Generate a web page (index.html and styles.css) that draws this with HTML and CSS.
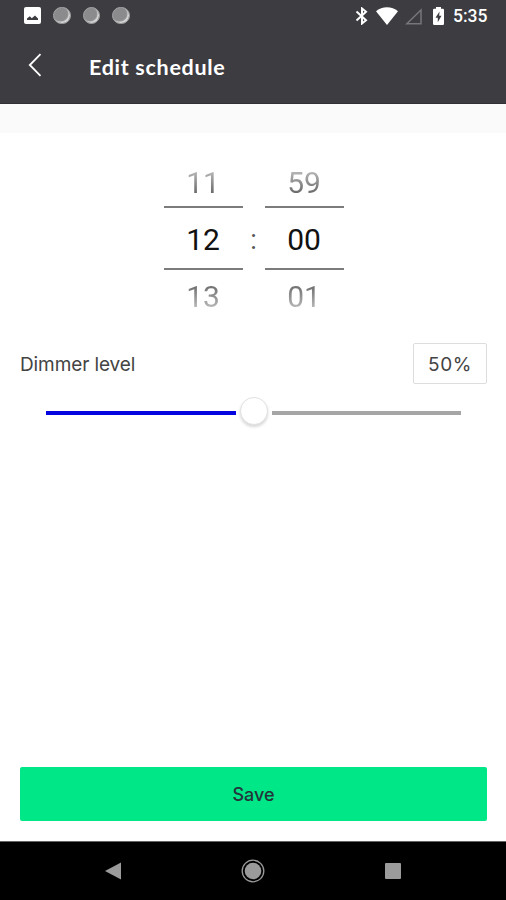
FILE: index.html
```html
<!DOCTYPE html>
<html lang="en">

<head>
    <meta charset="utf-8">
    <title>Edit schedule</title>
    <link rel="stylesheet" href="styles.css">
</head>

<body>
    <header>
        <div class="status-bar">
            <div class="notifications">
                <svg width="17" height="17" viewBox="0 0 17 17">
                    <rect width="17" height="17" rx="2" fill="#fff" />
                    <path d="M3 13v-1.5L5.8 9.3l2 2L11 8.5l3 3V13z" fill="#3d3c41" />
                </svg>
                <span class="dot"></span>
                <span class="dot"></span>
                <span class="dot"></span>
            </div>
            <div class="system">
                <svg class="bluetooth" width="13" height="18" viewBox="0 0 13 18">
                    <path d="M1.5 4.5l9.5 8.7L7 16.5v-15l4 3.3-9.5 8.7" fill="none" stroke="#fff" stroke-width="2" />
                </svg>
                <svg class="wifi" width="22" height="18" viewBox="0 0 22 18">
                    <path d="M0 4.2C6-1.1 16-1.1 22 4.2L11 18z" fill="#fff" />
                </svg>
                <svg class="signal" width="18" height="18" viewBox="0 0 18 18">
                    <path d="M1.8 16.7L16 3v13.7z" fill="none" stroke="#77767a" stroke-width="1.5" />
                </svg>
                <svg class="battery" width="11" height="18" viewBox="0 0 11 18">
                    <path d="M1.2 1.8H3V0h5v1.8h1.8Q11 1.8 11 3v13.8q0 1.2-1.2 1.2H1.2Q0 18 0 16.8V3q0-1.2 1.2-1.2z" fill="#fff" />
                    <path d="M6.5 4.5L2.5 10.7h2.3v4.5l3.7-6.4H6.2z" fill="#3d3c41" />
                </svg>
                <span class="clock">5:35</span>
            </div>
        </div>
        <div class="title-bar">
            <svg width="14" height="24" viewBox="0 0 14 24">
                <path d="M12.5 1.2L1.8 12l10.7 10.8" fill="none" stroke="#fff" stroke-width="1.8" />
            </svg>
            <h1>Edit schedule</h1>
        </div>
    </header>

    <main>
        <div class="time-picker">
            <div class="wheel">
                <span class="previous">11</span>
                <span class="current">12</span>
                <span class="next">13</span>
            </div>
            <span class="colon">:</span>
            <div class="wheel">
                <span class="previous">59</span>
                <span class="current">00</span>
                <span class="next">01</span>
            </div>
        </div>

        <div class="dimmer">
            <label>Dimmer level</label>
            <output>50%</output>
        </div>
        <div class="slider">
            <span class="track filled"></span>
            <span class="thumb"></span>
            <span class="track"></span>
        </div>

        <button type="button">Save</button>
    </main>

    <nav>
        <svg width="16" height="18" viewBox="0 0 16 18">
            <path d="M0 9L16 .5v17z" fill="#9b9b9b" />
        </svg>
        <svg width="24" height="24" viewBox="0 0 24 24">
            <circle cx="12" cy="12" r="8.3" fill="#9b9b9b" />
            <circle cx="12" cy="12" r="10.8" fill="none" stroke="#9b9b9b" stroke-width="1.3" />
        </svg>
        <svg width="16" height="16" viewBox="0 0 16 16">
            <rect width="16" height="16" rx="1" fill="#9b9b9b" />
        </svg>
    </nav>
</body>

</html>
```
FILE: styles.css
```css
* {
    box-sizing: border-box;
}

body {
    margin: 0;
    height: 900px;
    display: flex;
    flex-direction: column;
    font-family: Inter, sans-serif;
    background-color: #fff;
}

svg {
    display: block;
    flex-shrink: 0;
}

header {
    height: 104px;
    background-color: #3d3c41;
    border-bottom: 1px solid #313035;
    color: #fff;
}

.status-bar {
    height: 31px;
    padding: 0 18px 0 24px;
    display: flex;
    justify-content: space-between;
    align-items: center;
}

.notifications,
.system {
    display: flex;
    align-items: center;
}

.notifications {
    gap: 12px;
}

.dot {
    width: 17.5px;
    height: 17.5px;
    border-radius: 50%;
    background-color: #8b8a8c;
    border: 1px solid #a5a4a6;
    box-shadow: inset -1.5px -1.5px 1px #d8d8d8;
}

.wifi {
    margin-left: 8px;
}

.signal {
    margin-left: 7px;
}

.battery {
    margin-left: 10px;
}

.clock {
    margin-left: 9px;
    width: 35px;
    font: 500 17.5px/20px Roboto, sans-serif;
}

.title-bar {
    height: 68px;
    padding-left: 28px;
    display: flex;
    align-items: center;
}

h1 {
    margin: 4px 0 0 47px;
    font: bold 21.5px/26px Lato, sans-serif;
    letter-spacing: 0.7px;
}

main {
    flex: 1;
    display: flex;
    flex-direction: column;
    padding: 0 19px 20px 20px;
    border-top: 29px solid #fafafa;
}

.time-picker {
    margin-top: 18px;
    display: flex;
    justify-content: center;
    align-items: center;
    font: 30px/60px Roboto, sans-serif;
}

.wheel {
    width: 79px;
    display: flex;
    flex-direction: column;
    text-align: center;
}

.wheel span {
    color: transparent;
    background-clip: text;
    -webkit-background-clip: text;
}

.wheel .previous {
    height: 55px;
    line-height: 64px;
    background-image: linear-gradient(#b8b8b8 20px, #5c5c5c 46px);
}

.wheel .current {
    height: 64px;
    line-height: 63px;
    color: #111;
    border-top: 2px solid #7c7c7c;
    border-bottom: 2px solid #7c7c7c;
}

.wheel .next {
    height: 55px;
    line-height: 53px;
    background-image: linear-gradient(#686868 14px, #c0c0c0 40px);
}

.colon {
    width: 22px;
    padding-top: 4px;
    text-align: center;
    color: #555;
    font-size: 27px;
}

.dimmer {
    margin-top: 18px;
    display: flex;
    justify-content: space-between;
    align-items: center;
    font-size: 19px;
    color: #444;
}

label {
    padding-top: 2px;
    letter-spacing: -0.1px;
}

output {
    width: 74px;
    height: 41px;
    line-height: 41px;
    text-align: center;
    border: 1.5px solid #ddd;
    border-radius: 2px;
    letter-spacing: 0.6px;
}

.slider {
    height: 28px;
    margin: 13px 26px 0;
    display: flex;
    align-items: center;
}

.track {
    flex: 1;
    height: 3.5px;
    margin-top: 4px;
    background-color: #a5a5a5;
}

.track.filled {
    background-color: #0505df;
}

.thumb {
    width: 28px;
    height: 28px;
    margin: 0 4px;
    border-radius: 50%;
    border: 1px solid #e2e2e2;
    background-color: #fff;
    box-shadow: 0 2px 3px rgba(0, 0, 0, 0.16);
}

button {
    height: 54px;
    margin-top: auto;
    padding-top: 2px;
    border: none;
    border-radius: 2px;
    background-color: #00e788;
    color: #23353a;
    font: 500 18px Inter, sans-serif;
}

nav {
    height: 59px;
    padding: 0 105px;
    display: flex;
    justify-content: space-between;
    align-items: center;
    background-color: #000;
    border-top: 1px solid #666;
}
```
